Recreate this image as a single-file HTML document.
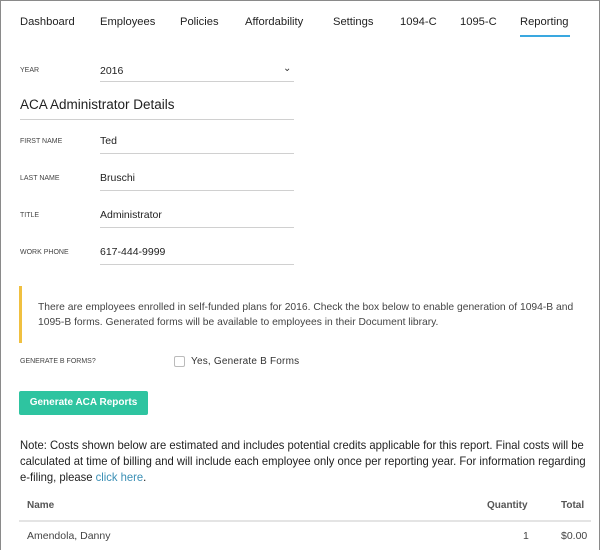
<!DOCTYPE html>
<html><head><style>
*{margin:0;padding:0;box-sizing:border-box}
body{width:600px;height:550px;background:#fff;font-family:"Liberation Sans",sans-serif;color:#333;position:relative;overflow:hidden;border:1px solid #8a8a8a;border-bottom:none}
.a{position:absolute;white-space:nowrap}
.nav{font-size:11.2px;top:15px;color:#222}
.lbl{font-size:7px;color:#444;left:19px}
.val{font-size:10.5px;left:99px;color:#222}
.ln{position:absolute;height:1px;background:#d0d0d0}
</style></head><body>
<div class="a nav" style="left:19px">Dashboard</div>
<div class="a nav" style="left:99px">Employees</div>
<div class="a nav" style="left:179px">Policies</div>
<div class="a nav" style="left:244px">Affordability</div>
<div class="a nav" style="left:332px">Settings</div>
<div class="a nav" style="left:399px">1094-C</div>
<div class="a nav" style="left:459px">1095-C</div>
<div class="a nav" style="left:519px">Reporting</div>
<div class="ln" style="left:519px;top:34px;width:50px;height:2px;background:#3aa8e0"></div>

<div class="a lbl" style="top:66px">YEAR</div>
<div class="a val" style="top:64px">2016</div>
<div class="a" style="left:282px;top:62px;font-size:10px">&#8964;</div>
<div class="ln" style="left:99px;top:80px;width:194px"></div>

<div class="a" style="left:19px;top:96px;font-size:13.5px;color:#222">ACA Administrator Details</div>
<div class="ln" style="left:19px;top:118px;width:274px"></div>

<div class="a lbl" style="top:137px">FIRST NAME</div>
<div class="a val" style="top:134px">Ted</div>
<div class="ln" style="left:99px;top:152px;width:194px"></div>
<div class="a lbl" style="top:174px">LAST NAME</div>
<div class="a val" style="top:171px">Bruschi</div>
<div class="ln" style="left:99px;top:189px;width:194px"></div>
<div class="a lbl" style="top:211px">TITLE</div>
<div class="a val" style="top:208px">Administrator</div>
<div class="ln" style="left:99px;top:226px;width:194px"></div>
<div class="a lbl" style="top:248px">WORK PHONE</div>
<div class="a val" style="top:245px">617-444-9999</div>
<div class="ln" style="left:99px;top:263px;width:194px"></div>

<div class="ln" style="left:18px;top:285px;width:3px;height:57px;background:#f0c040"></div>
<div class="a" style="left:37px;top:299px;font-size:10.3px;line-height:15px;color:#444">There are employees enrolled in self-funded plans for 2016. Check the box below to enable generation of 1094-B and<br>1095-B forms. Generated forms will be available to employees in their Document library.</div>

<div class="a lbl" style="top:357px">GENERATE B FORMS?</div>
<div class="a" style="left:173px;top:355px;width:11px;height:11px;border:1px solid #bbb;border-radius:2px"></div>
<div class="a" style="left:190px;top:355px;font-size:10px;color:#333;letter-spacing:.2px">Yes, Generate B Forms</div>

<div class="a" style="left:18px;top:390px;width:129px;height:24px;background:#2ec4a0;border-radius:2px;color:#fff;font-size:10px;font-weight:bold;text-align:center;line-height:24px">Generate ACA Reports</div>

<div class="a" style="left:19px;top:436px;font-size:12px;line-height:16px;color:#222;transform:scaleX(0.937);transform-origin:0 0">Note: Costs shown below are estimated and includes potential credits applicable for this report. Final costs will be<br>calculated at time of billing and will include each employee only once per reporting year. For information regarding<br>e-filing, please <span style="color:#3a8fb5">click here</span>.</div>

<div class="a" style="left:26px;top:499px;font-size:10px;font-weight:bold;color:#555">Name</div>
<div class="a" style="left:486px;top:499px;font-size:10px;font-weight:bold;color:#555">Quantity</div>
<div class="a" style="left:560px;top:499px;font-size:10px;font-weight:bold;color:#555">Total</div>
<div class="ln" style="left:18px;top:519px;width:572px;height:2px;background:#e4e4e4"></div>
<div class="a" style="left:26px;top:529px;font-size:10.5px;color:#444">Amendola, Danny</div>
<div class="a" style="left:522px;top:529px;font-size:10.5px;color:#444">1</div>
<div class="a" style="left:560px;top:529px;font-size:10.5px;color:#444">$0.00</div>
</body></html>
